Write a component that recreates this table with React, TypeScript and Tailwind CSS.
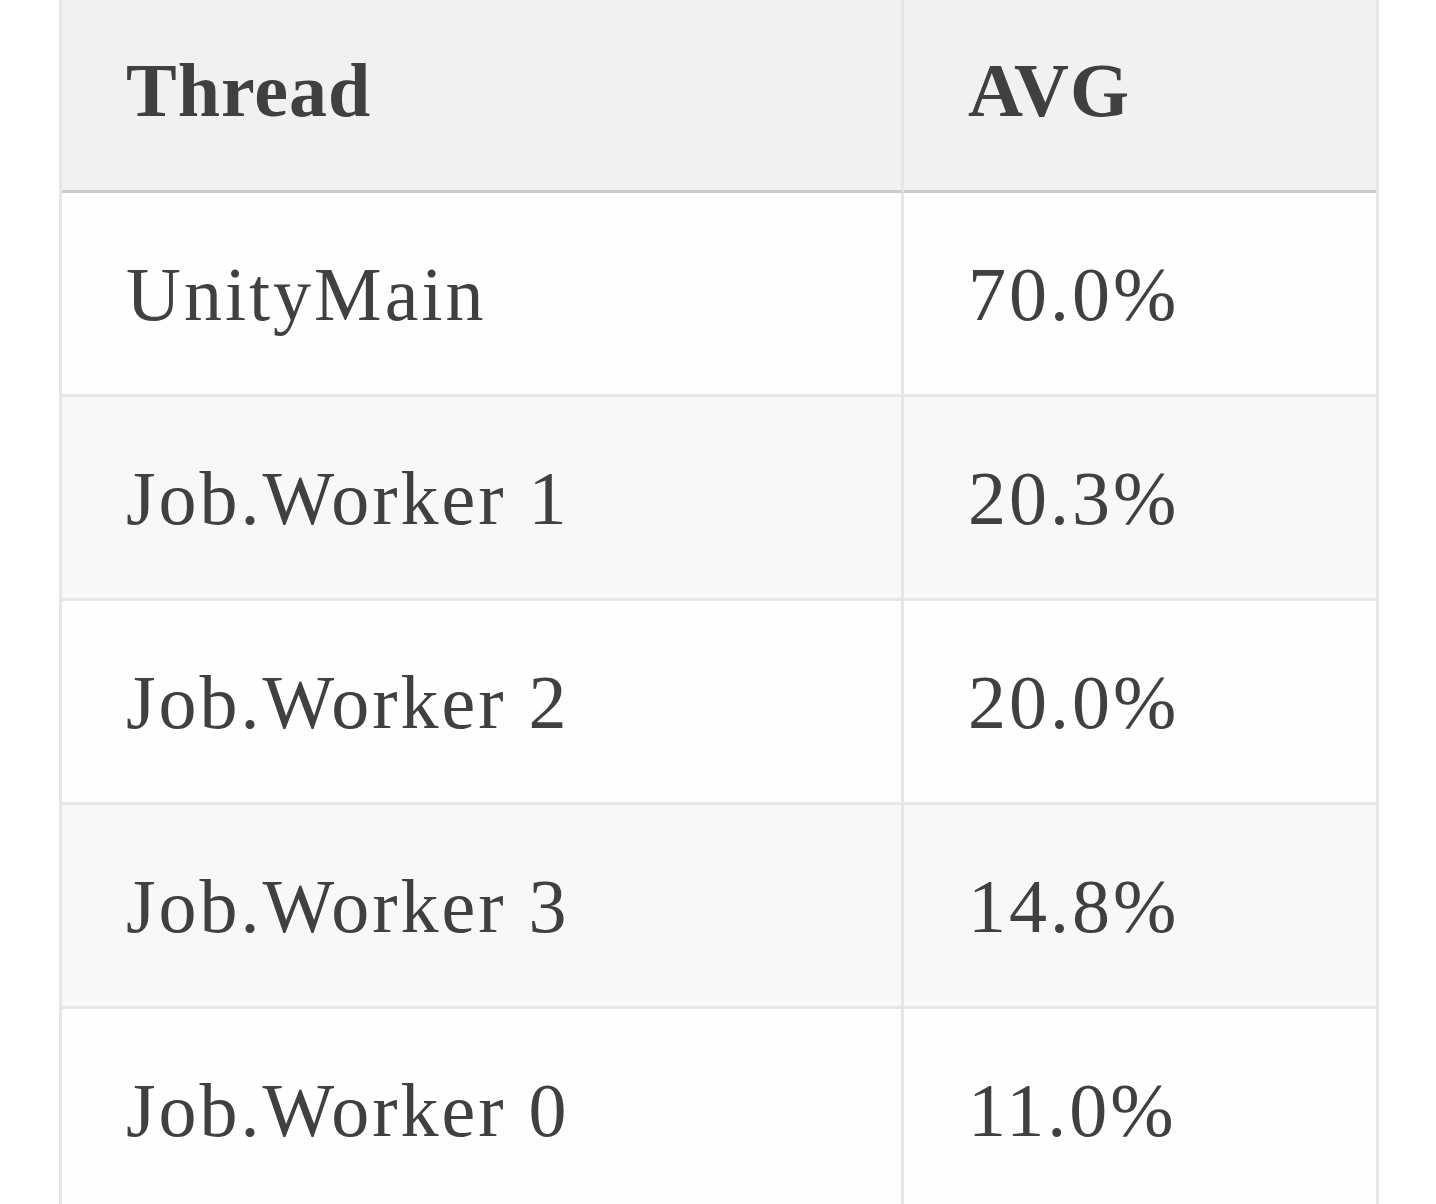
import React from 'react';

// Thread usage rows
const rows = [
  { thread: 'UnityMain', avg: '70.0%' },
  { thread: 'Job.Worker 1', avg: '20.3%' },
  { thread: 'Job.Worker 2', avg: '20.0%' },
  { thread: 'Job.Worker 3', avg: '14.8%' },
  { thread: 'Job.Worker 0', avg: '11.0%' },
];

const App: React.FC = () => {
  return (
    <div className="min-h-screen overflow-hidden bg-white font-['Liberation_Serif',serif] text-[#404040]">
      <table className="ml-[59px] mt-[-11px] w-[1320px] table-fixed border-separate border-spacing-0 border-x-[3px] border-[#e6e6e6] text-[76px] leading-none tracking-[3px]">
        <colgroup>
          <col className="w-[842px]" />
          <col />
        </colgroup>
        <thead>
          <tr className="bg-[#f1f1f1]">
            <th className="h-[204px] border-b-[3px] border-r-[3px] border-b-[#cccccc] border-r-[#e6e6e6] pl-16 text-left align-middle font-bold tracking-[1px]">
              Thread
            </th>
            <th className="h-[204px] border-b-[3px] border-b-[#cccccc] pl-16 text-left align-middle font-bold tracking-[1px]">
              AVG
            </th>
          </tr>
        </thead>
        <tbody>
          {rows.map((row, i) => (
            <tr key={row.thread} className={i % 2 === 0 ? 'bg-[#fefefe]' : 'bg-[#f8f8f8]'}>
              <td className="h-[204px] border-b-[3px] border-r-[3px] border-[#e6e6e6] pl-16 align-middle">
                {row.thread}
              </td>
              <td className="h-[204px] border-b-[3px] border-[#e6e6e6] pl-16 align-middle">
                {row.avg}
              </td>
            </tr>
          ))}
        </tbody>
      </table>
    </div>
  );
};

export default App;
